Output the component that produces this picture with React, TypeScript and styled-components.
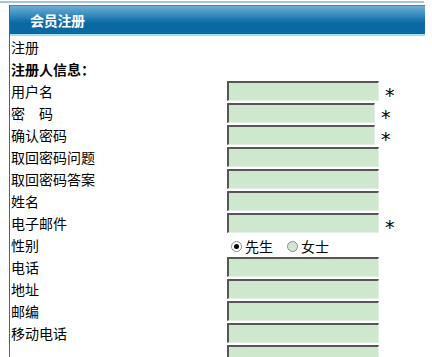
import styled, { createGlobalStyle } from "styled-components";

const GlobalStyle = createGlobalStyle`
  body {
    margin: 0;
    background: #ffffff;
    font-family: "Noto Sans CJK SC", "Noto Sans", sans-serif;
    font-size: 14px;
    color: #000000;
  }
`;

type Field = {
  label: string;
  required?: boolean;
  narrow?: boolean;
  kind?: "text" | "gender";
};

const fields: Field[] = [
  { label: "用户名", required: true },
  { label: "密\u3000码", required: true, narrow: true },
  { label: "确认密码", required: true, narrow: true },
  { label: "取回密码问题" },
  { label: "取回密码答案" },
  { label: "姓名" },
  { label: "电子邮件", required: true },
  { label: "性别", kind: "gender" },
  { label: "电话" },
  { label: "地址" },
  { label: "邮编" },
  { label: "移动电话" },
  { label: "" },
];

const App = () => {
  return (
    <Page>
      <GlobalStyle />
      <TopRule />
      <Panel>
        <Header>
          <Title>会员注册</Title>
        </Header>
        <Line>注册</Line>
        <Line bold>注册人信息：</Line>
        {fields.map((f, i) => (
          <Row key={i}>
            <Label>{f.label}</Label>
            <Cell>
              {f.kind === "gender" ? (
                <Radios>
                  <RadioLabel>
                    <Radio type="radio" name="sex" defaultChecked />
                    先生
                  </RadioLabel>
                  <RadioLabel>
                    <Radio type="radio" name="sex" />
                    女士
                  </RadioLabel>
                </Radios>
              ) : (
                <>
                  <TextBox narrow={f.narrow} type={f.narrow ? "password" : "text"} />
                  {f.required && <Star>*</Star>}
                </>
              )}
            </Cell>
          </Row>
        ))}
      </Panel>
    </Page>
  );
};

export default App;

const Page = styled.div`
  width: 432px;
  height: 357px;
  overflow: hidden;
`;

const TopRule = styled.div`
  width: 424px;
  height: 2px;
  margin-top: 1px;
  background: #a6c4de;
`;

const Panel = styled.div`
  width: 415px;
  margin-left: 9px;
  margin-top: 2px;
  border-left: 1px solid #2a6f9e;
`;

const Header = styled.div`
  height: 28px;
  display: flex;
  align-items: center;
  padding-left: 20px;
  background: linear-gradient(#6eaed6 0%, #2a82b8 40%, #0b6aa3 60%, #0a68a2 100%);
  border-top: 1px solid #3d86b8;
  border-bottom: 2px solid #a2def0;
`;

const Title = styled.span`
  color: #ffffff;
  font-weight: bold;
  font-size: 14px;
  letter-spacing: -0.3px;
`;

const Line = styled.div<{ bold?: boolean }>`
  height: 22px;
  line-height: 22px;
  padding-left: 1px;
  font-weight: ${(p) => (p.bold ? "bold" : "normal")};
`;

const Row = styled.div`
  display: grid;
  grid-template-columns: 217px 1fr;
  height: 22px;
  align-items: center;
`;

const Label = styled.div`
  padding-left: 1px;
  line-height: 22px;
  white-space: pre;
`;

const Cell = styled.div`
  display: flex;
  align-items: center;
  height: 22px;
`;

const TextBox = styled.input<{ narrow?: boolean }>`
  box-sizing: border-box;
  width: ${(p) => (p.narrow ? "148px" : "152px")};
  height: 20px;
  margin: 0;
  padding: 0 2px;
  background: #cde8cd;
  border-top: 2px solid #565656;
  border-left: 2px solid #565656;
  border-right: 1px solid #e4efe4;
  border-bottom: 1px solid #e4efe4;
  outline: none;
`;

const Star = styled.span`
  margin-left: 6px;
  font-family: "DejaVu Sans", sans-serif;
  font-size: 19px;
  line-height: 1;
  padding-top: 9px;
`;

const Radios = styled.div`
  display: flex;
  align-items: center;
  gap: 14px;
  padding-left: 4px;
  padding-top: 2px;
`;

const RadioLabel = styled.label`
  display: flex;
  align-items: center;
  gap: 3px;
`;

const Radio = styled.input`
  appearance: none;
  box-sizing: border-box;
  width: 11px;
  height: 11px;
  margin: 0;
  border-radius: 50%;
  border: 1px solid #8c8c8c;
  background: #d3e6d3;
  display: grid;
  place-content: center;
  &:checked {
    background: #ffffff;
  }
  &:checked::before {
    content: "";
    width: 5px;
    height: 5px;
    border-radius: 50%;
    background: #000000;
  }
`;
